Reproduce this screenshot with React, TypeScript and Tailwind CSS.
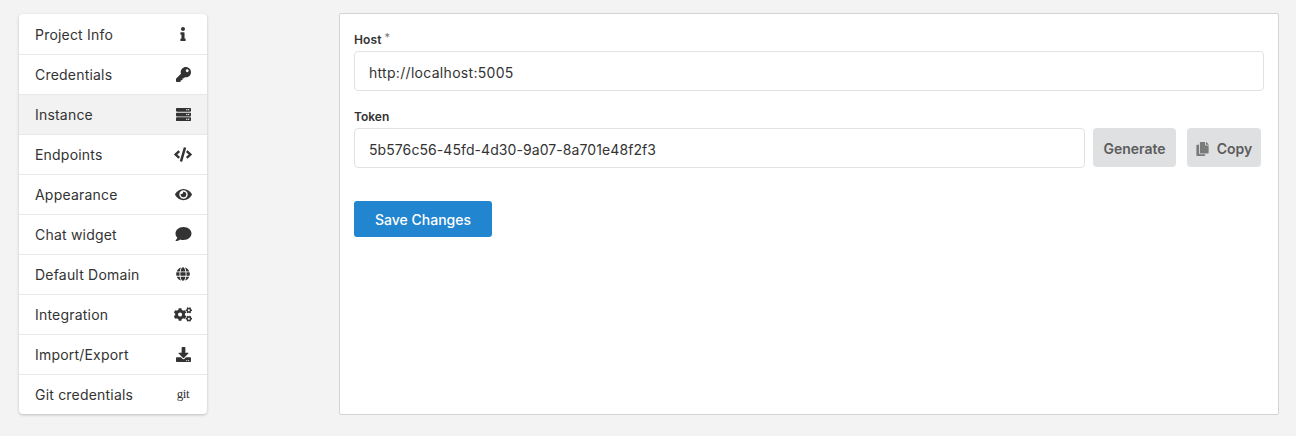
import { FaInfo, FaKey, FaServer, FaCode, FaEye, FaComment, FaGlobe, FaCogs, FaDownload, FaCopy } from "react-icons/fa";
import type { ReactNode } from "react";

const MENU: { label: string; icon: ReactNode; active?: boolean }[] = [
    { label: "Project Info", icon: <FaInfo className="w-[14px] h-[14px]" /> },
    { label: "Credentials", icon: <FaKey className="w-[15px] h-[15px]" /> },
    { label: "Instance", icon: <FaServer className="w-[15px] h-[15px]" />, active: true },
    { label: "Endpoints", icon: <FaCode className="w-[18px] h-[15px]" /> },
    { label: "Appearance", icon: <FaEye className="w-[17px] h-[15px]" /> },
    { label: "Chat widget", icon: <FaComment className="w-[17px] h-[16px] -mt-px" /> },
    { label: "Default Domain", icon: <FaGlobe className="w-[14px] h-[14px]" /> },
    { label: "Integration", icon: <FaCogs className="w-[18px] h-[15px]" /> },
    { label: "Import/Export", icon: <FaDownload className="w-[15px] h-[15px]" /> },
    { label: "Git credentials", icon: <span className="text-[13px] leading-[14px] tracking-[-0.4px] -mt-px font-['Liberation_Serif',serif]">git</span> },
];

export default function App() {
    return (
        <div className="min-h-[436px] bg-[#f3f3f3] flex items-start pt-[13px] pl-[19px] pr-[17px] font-['Inter',sans-serif] text-[#333333]">
            {/* Sidebar */}
            <div className="mt-px w-[188px] shrink-0 bg-white rounded shadow-[0_1px_3px_rgba(0,0,0,0.22)]">
                {MENU.map((item, i) => (
                    <div
                        key={item.label}
                        className={`h-10 flex items-center justify-between pl-4 pr-[15px] text-sm tracking-[0.2px] ${i > 0 ? "border-t border-[#e8e8e8]" : ""} ${item.active ? "bg-[#f2f2f2]" : ""}`}
                    >
                        <span className="mt-px">{item.label}</span>
                        <span className="w-[18px] flex justify-center text-[#333333] -mt-px">{item.icon}</span>
                    </div>
                ))}
            </div>

            {/* Form panel */}
            <div className="ml-[132px] flex-1 h-[402px] bg-white border border-[#d4d4d4] rounded-[2px] pt-[15px] px-[14px]">
                <div className="text-xs font-semibold leading-[22px] h-[22px] tracking-[0.1px]">
                    Host <span className="font-normal text-[#777777] align-top text-[11px] leading-[16px]">*</span>
                </div>
                <input
                    readOnly
                    value="http://localhost:5005"
                    className="w-full h-10 border border-[#e2e2e2] rounded px-[14px] pt-[2px] text-sm tracking-[0.3px] text-[#333333] outline-none"
                />
                <div className="mt-[15px] text-xs font-semibold leading-[22px]">Token</div>
                <div className="flex">
                    <input
                        readOnly
                        value="5b576c56-45fd-4d30-9a07-8a701e48f2f3"
                        className="w-[731px] h-10 border border-[#e2e2e2] rounded px-[14px] pt-[2px] text-sm tracking-[0.08px] text-[#333333] outline-none"
                    />
                    <button className="ml-2 w-[83px] h-[39px] pt-[2px] rounded bg-[#dfe0e2] text-[#5c5c5c] text-sm font-semibold">Generate</button>
                    <button className="ml-[11px] w-[74px] h-[39px] pt-[2px] rounded bg-[#dfe0e2] text-[#5c5c5c] text-sm font-semibold flex items-center justify-center gap-2">
                        <FaCopy className="w-[13px] h-[14px] text-[#7a7a7a]" />
                        Copy
                    </button>
                </div>
                <button className="mt-[33px] w-[138px] h-9 pt-[2px] rounded-[3px] bg-[#2185d0] text-white text-sm font-medium block">Save Changes</button>
            </div>
        </div>
    );
}
